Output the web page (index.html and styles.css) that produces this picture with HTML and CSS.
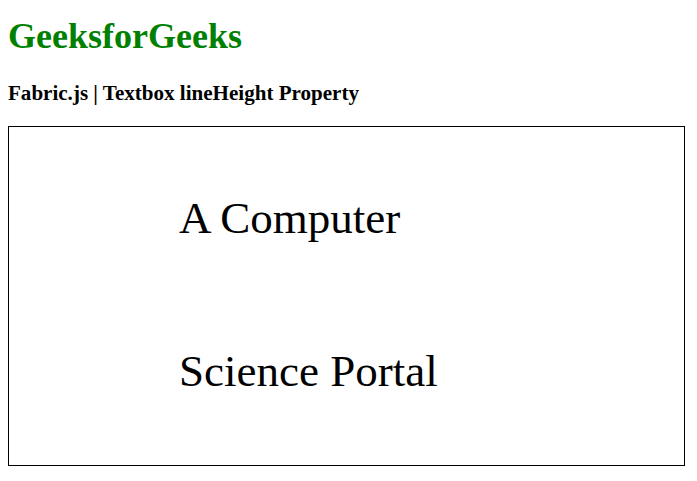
FILE: index.html
```html
<!DOCTYPE html>
<html>
<head>
<meta charset="utf-8">
<link rel="stylesheet" href="styles.css">
</head>
<body>
<h1 class="title">GeeksforGeeks</h1>
<h3 class="subtitle">Fabric.js | Textbox lineHeight Property</h3>
<div class="canvas">
  <div class="textbox">
    <div class="line">A Computer</div>
    <div class="line">Science Portal</div>
  </div>
</div>
</body>
</html>
```
FILE: styles.css
```css
body {
  margin: 0 8px;
  font-family: "Liberation Serif", "Times New Roman", serif;
  background: #fff;
  color: #000;
}
.title {
  color: #008000;
  font-size: 36px;
  margin: 14.5px 0 24px;
}
.subtitle {
  font-size: 21.06px;
  margin: 0 0 20.5px;
}
.canvas {
  width: 675px;
  height: 338px;
  border: 1px solid #000;
  box-sizing: content-box;
}
.textbox {
  display: flex;
  flex-direction: column;
  gap: 102.5px;
  padding: 66px 0 0 170px;
  font-size: 45px;
}
.line {
  line-height: 50px;
}
```
